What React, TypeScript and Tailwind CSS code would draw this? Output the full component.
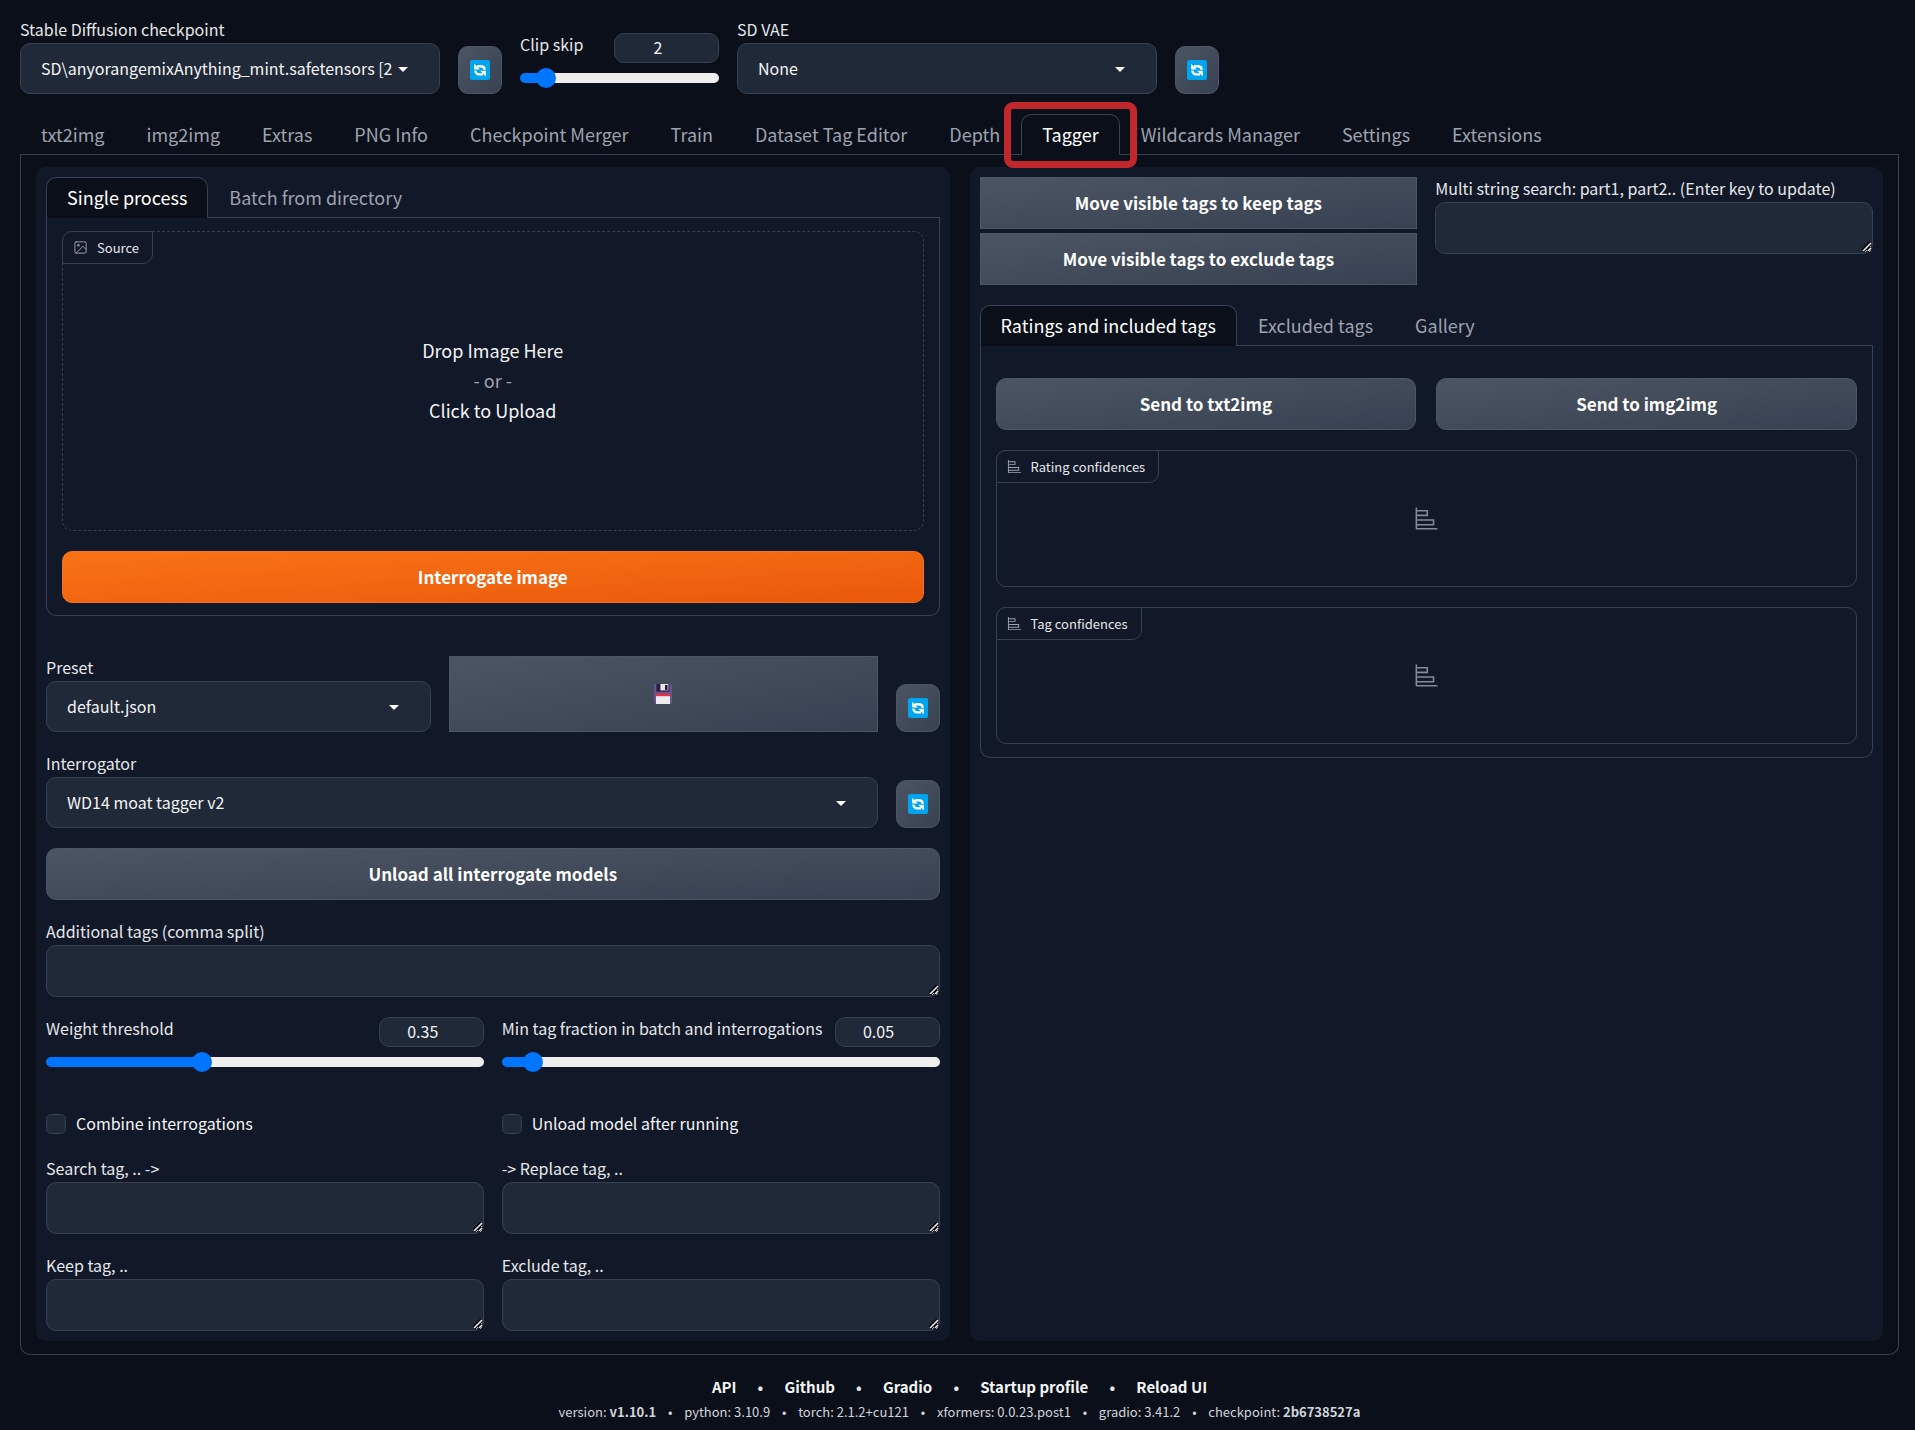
import { useId, useState } from 'react';
import type { CSSProperties, ReactNode } from 'react';
import { clsx } from 'clsx';

const FIELD = 'border border-[#374151] bg-[#1f2937] text-[#f3f4f6]';
const SECONDARY = 'border border-[#4b5563] bg-linear-to-br from-[#4b5563] to-[#374151]';

const mainTabs = [
  'txt2img',
  'img2img',
  'Extras',
  'PNG Info',
  'Checkpoint Merger',
  'Train',
  'Dataset Tag Editor',
  'Depth',
  'Tagger',
  'Wildcards Manager',
  'Settings',
  'Extensions',
];

const footerLinks = ['API', 'Github', 'Gradio', 'Startup profile', 'Reload UI'];

const versions = [
  { name: 'version', value: 'v1.10.1', strong: true },
  { name: 'python', value: '3.10.9' },
  { name: 'torch', value: '2.1.2+cu121' },
  { name: 'xformers', value: '0.0.23.post1' },
  { name: 'gradio', value: '3.41.2' },
  { name: 'checkpoint', value: '2b6738527a', strong: true },
];

function RefreshIcon() {
  return (
    <svg viewBox="0 0 20 20" className="size-5" aria-hidden="true">
      <rect width="20" height="20" rx="2" fill="#00a4ef" />
      <g fill="none" stroke="#fff" strokeWidth="2.4">
        <path d="M7 6.2h4.2a3.6 3.6 0 0 1 3.4 3.6" />
        <path d="M13 14.4H9a3.6 3.6 0 0 1-3.5-3.8" />
      </g>
      <path d="M4.2 3.8v5.8h5.6z" fill="#fff" />
      <path d="M15.8 16.4v-5.6h-5.6z" fill="#fff" />
    </svg>
  );
}

function FloppyIcon() {
  return (
    <svg viewBox="0 0 20 20" className="size-5" aria-hidden="true">
      <path d="M1 0h17l1 1v18.5H1z" fill="#64558f" />
      <path d="M3.4 0h13v7.6h-13z" fill="#2b1c3f" />
      <path d="M7.4 0h8v6.4h-8z" fill="#e8e6ea" />
      <path d="M12 1h2.6v5H12z" fill="#2b1c3f" />
      <path d="M3 9.6h14v2.6H3z" fill="#e8313e" />
      <path d="M3 12.2h14V20H3z" fill="#ececf0" />
    </svg>
  );
}

function ImageIcon() {
  return (
    <svg
      viewBox="0 0 24 24"
      className="size-[15px]"
      fill="none"
      stroke="currentColor"
      strokeWidth="1.5"
      strokeLinecap="round"
      strokeLinejoin="round"
      aria-hidden="true"
    >
      <rect x="3" y="3" width="18" height="18" rx="2" />
      <circle cx="8.5" cy="8.5" r="1.5" />
      <path d="m21 15-5-5L5 21" />
    </svg>
  );
}

function ChartIcon({ className }: { className: string }) {
  return (
    <svg viewBox="0 0 32 32" className={className} aria-hidden="true">
      <path
        fill="currentColor"
        d="M4 2H2v26a2 2 0 0 0 2 2h26v-2H4v-3h22v-8H4v-4h14V5H4Zm20 17v4H4v-4ZM16 7v4H4V7Z"
      />
    </svg>
  );
}

function Label({ htmlFor, children }: { htmlFor: string; children: ReactNode }) {
  return (
    <label htmlFor={htmlFor} className="block pb-0.5 text-base leading-[23px] whitespace-nowrap text-[#e5e7eb]">
      {children}
    </label>
  );
}

function Dropdown({ label, value, className }: { label: string; value: string; className: string }) {
  const id = useId();
  return (
    <div className={className}>
      <Label htmlFor={id}>{label}</Label>
      <div className="relative">
        <select
          id={id}
          className={clsx(FIELD, 'block h-[51px] w-full appearance-none rounded-[10px] pr-[46px] pb-0.5 pl-5 text-base')}
        >
          <option>{value}</option>
        </select>
        <svg viewBox="0 0 10 5" className="pointer-events-none absolute top-6 right-8 h-[5px] w-2.5" aria-hidden="true">
          <path d="M0 0h10L5 5z" fill="#fff" />
        </svg>
      </div>
    </div>
  );
}

function TextArea({ label, className }: { label: string; className?: string }) {
  const id = useId();
  return (
    <div className={className}>
      <Label htmlFor={id}>{label}</Label>
      <div className="relative">
        <textarea id={id} rows={1} className={clsx(FIELD, 'block h-[52px] w-full resize-y rounded-[10px] px-3 py-2')} />
        <svg viewBox="0 0 10 10" className="pointer-events-none absolute right-px bottom-[3px] size-2.5" aria-hidden="true">
          <path d="M0 9 8 1M5 9l3-3" stroke="#000" strokeWidth="1.5" />
          <path d="M1 10 9 2M6 10l3-3" stroke="#e5e7eb" strokeWidth="1.5" />
        </svg>
      </div>
    </div>
  );
}

type SliderProps = {
  label: string;
  min: number;
  max: number;
  step: number;
  initial: number;
  className?: string;
};

function Slider({ label, min, max, step, initial, className }: SliderProps) {
  const id = useId();
  const [value, setValue] = useState(initial);
  const ratio = (value - min) / (max - min);
  // the thumb is 20px wide, so the fill ends at its centre
  const fill = { '--fill': `calc(10px + (100% - 20px) * ${ratio})` } as CSSProperties;

  return (
    <div className={clsx('h-[61px]', className)}>
      <div className="flex items-start justify-between">
        <Label htmlFor={id}>{label}</Label>
        <input
          type="number"
          aria-label={`${label} value`}
          min={min}
          max={max}
          step={step}
          value={value}
          onChange={(e) => setValue(Number(e.target.value))}
          className={clsx(FIELD, 'h-[30px] w-[105px] rounded-[10px] pr-1.5 pb-0.5 pl-1 text-center text-base')}
        />
      </div>
      <input
        id={id}
        type="range"
        min={min}
        max={max}
        step={step}
        value={value}
        onChange={(e) => setValue(Number(e.target.value))}
        style={fill}
        className="mt-[5px] block h-5 w-full appearance-none bg-transparent [&::-webkit-slider-runnable-track]:h-2.5 [&::-webkit-slider-runnable-track]:rounded-full [&::-webkit-slider-runnable-track]:bg-[linear-gradient(to_right,#0075ff_var(--fill),#efefef_var(--fill))] [&::-webkit-slider-thumb]:-mt-[5px] [&::-webkit-slider-thumb]:size-5 [&::-webkit-slider-thumb]:appearance-none [&::-webkit-slider-thumb]:rounded-full [&::-webkit-slider-thumb]:bg-[#0075ff]"
      />
    </div>
  );
}

function Checkbox({ label }: { label: string }) {
  return (
    <label className="flex items-center gap-2.5 text-base leading-[18px] text-[#f3f4f6]">
      <input type="checkbox" className={clsx(FIELD, 'size-5 appearance-none rounded-[5px] checked:bg-[#ea580c]')} />
      <span className="pb-0.5">{label}</span>
    </label>
  );
}

function RefreshButton({ label }: { label: string }) {
  return (
    <button
      type="button"
      aria-label={label}
      className={clsx(SECONDARY, 'flex h-12 w-11 shrink-0 items-center justify-center rounded-[10px]')}
    >
      <RefreshIcon />
    </button>
  );
}

function Button({ children, className }: { children: ReactNode; className?: string }) {
  return (
    <button type="button" className={clsx('h-[52px] text-[17px] leading-6 font-bold text-white', className)}>
      {children}
    </button>
  );
}

function Tabs({ items, selected, marked }: { items: string[]; selected: string; marked?: boolean }) {
  return (
    <div role="tablist" className="flex h-[41px] border-b border-[#374151]">
      {items.map((item) => (
        <button
          key={item}
          type="button"
          role="tab"
          aria-selected={item === selected}
          className={clsx(
            'relative -mb-px h-[41px] rounded-t-[10px] border border-b-0 px-5 pb-0.5 text-lg leading-6 whitespace-nowrap',
            item === selected ? 'border-[#374151] bg-[#0b0f19] text-white' : 'border-transparent text-[#9ca3af]',
          )}
        >
          {item}
          {marked && item === selected && (
            <span className="pointer-events-none absolute -inset-x-[18px] -top-[13px] -bottom-[13px] z-10 rounded-[9px] border-7 border-[#c1272d]" />
          )}
        </button>
      ))}
    </div>
  );
}

function BlockLabel({ icon, children }: { icon: ReactNode; children: ReactNode }) {
  return (
    <div className="absolute -top-px -left-px flex h-[33px] items-center gap-[9px] rounded-tl-[10px] rounded-br-[10px] border border-[#374151] bg-[#111827] pr-[13px] pl-2.5 text-[13px] leading-5 text-[#e5e7eb]">
      <span className="text-[#9ca3af]">{icon}</span>
      {children}
    </div>
  );
}

function Confidences({ title }: { title: string }) {
  return (
    <section className="relative flex h-[137px] items-center justify-center rounded-[10px] border border-[#374151] text-[#848a96]">
      <BlockLabel icon={<ChartIcon className="size-[15px]" />}>{title}</BlockLabel>
      <ChartIcon className="size-[25px]" />
    </section>
  );
}

function QuickSettings() {
  return (
    <header className="flex items-end gap-[18px]">
      <Dropdown
        className="w-[420px]"
        label="Stable Diffusion checkpoint"
        value="SD\anyorangemixAnything_mint.safetensors [2b6738527a]"
      />
      <RefreshButton label="Refresh checkpoints" />
      <Slider className="w-[199px]" label="Clip skip" min={1} max={12} step={1} initial={2} />
      <Dropdown className="w-[420px]" label="SD VAE" value="None" />
      <RefreshButton label="Refresh VAE list" />
    </header>
  );
}

function InputPanel() {
  return (
    <section className="rounded-[10px] bg-[#111827] p-2.5">
      <Tabs items={['Single process', 'Batch from directory']} selected="Single process" />
      <div className="flex flex-col gap-5 rounded-b-[10px] border border-t-0 border-[#374151] px-[15px] pt-[13px] pb-3">
        <div className="relative h-[300px] rounded-[10px] border border-dashed border-[#374151]">
          <BlockLabel icon={<ImageIcon />}>Source</BlockLabel>
          <button
            type="button"
            className="flex size-full flex-col items-center justify-center pb-0.5 text-lg leading-[30px] text-[#f3f4f6]"
          >
            <span>Drop Image Here</span>
            <span className="text-[#9ca3af]">- or -</span>
            <span>Click to Upload</span>
          </button>
        </div>
        <Button className="rounded-[10px] border border-[#f97316] bg-linear-to-br from-[#f97316] to-[#ea580c]">
          Interrogate image
        </Button>
      </div>

      <div className="mt-10 flex flex-col gap-5">
        <div className="flex items-end gap-[18px]">
          <Dropdown className="flex-[19]" label="Preset" value="default.json" />
          <button
            type="button"
            aria-label="Save preset"
            className={clsx(SECONDARY, 'flex flex-[21] items-center justify-center self-stretch')}
          >
            <FloppyIcon />
          </button>
          <RefreshButton label="Refresh presets" />
        </div>
        <div className="flex items-end gap-[18px]">
          <Dropdown className="flex-1" label="Interrogator" value="WD14 moat tagger v2" />
          <RefreshButton label="Refresh interrogators" />
        </div>
        <Button className={clsx(SECONDARY, 'rounded-[10px]')}>Unload all interrogate models</Button>
        <TextArea label="Additional tags (comma split)" />
        <div className="grid grid-cols-2 gap-x-[18px]">
          <Slider label="Weight threshold" min={0} max={1} step={0.01} initial={0.35} />
          <Slider label="Min tag fraction in batch and interrogations" min={0} max={1} step={0.01} initial={0.05} />
        </div>
        <div className="grid grid-cols-2 gap-x-[18px] pt-4 pb-[3px]">
          <Checkbox label="Combine interrogations" />
          <Checkbox label="Unload model after running" />
        </div>
        <div className="grid grid-cols-2 gap-x-[18px] gap-y-5">
          <TextArea label="Search tag, .. ->" />
          <TextArea label="-> Replace tag, .." />
          <TextArea label="Keep tag, .." />
          <TextArea label="Exclude tag, .." />
        </div>
      </div>
    </section>
  );
}

function ResultPanel() {
  return (
    <section className="rounded-[10px] bg-[#111827] p-2.5">
      <div className="mb-5 grid grid-cols-2 gap-[18px]">
        <div className="flex flex-col gap-1">
          <Button className={SECONDARY}>Move visible tags to keep tags</Button>
          <Button className={SECONDARY}>Move visible tags to exclude tags</Button>
        </div>
        <TextArea label="Multi string search: part1, part2.. (Enter key to update)" />
      </div>
      <Tabs items={['Ratings and included tags', 'Excluded tags', 'Gallery']} selected="Ratings and included tags" />
      <div className="flex flex-col gap-5 rounded-b-[10px] border border-t-0 border-[#374151] px-[15px] pt-8 pb-[13px]">
        <div className="grid grid-cols-2 gap-5">
          <Button className={clsx(SECONDARY, 'rounded-[10px]')}>Send to txt2img</Button>
          <Button className={clsx(SECONDARY, 'rounded-[10px]')}>Send to img2img</Button>
        </div>
        <Confidences title="Rating confidences" />
        <Confidences title="Tag confidences" />
      </div>
    </section>
  );
}

function Footer() {
  return (
    <footer className="mt-[19px] flex flex-col items-center text-[#e5e7eb]">
      <nav className="flex text-[15px] leading-[26px] font-bold">
        {footerLinks.map((link, i) => (
          <span key={link} className="flex">
            {i > 0 && <span className="w-12 text-center">•</span>}
            <a href="#" className="text-[#f3f4f6]">
              {link}
            </a>
          </span>
        ))}
      </nav>
      <div className="flex text-[13px] leading-6 text-[#d1d5db]">
        {versions.map((v, i) => (
          <span key={v.name} className="flex">
            {i > 0 && <span className="w-7 text-center">•</span>}
            <span>
              {v.name}: <span className={clsx(v.strong && 'font-bold')}>{v.value}</span>
            </span>
          </span>
        ))}
      </div>
    </footer>
  );
}

export default function App() {
  return (
    <div className="min-h-screen bg-[#0b0f19] pt-[18px] pr-4 pl-5 font-['Noto_Sans_CJK_JP','Noto_Sans_CJK_SC',sans-serif]">
      <QuickSettings />
      <main className="mt-5">
        <Tabs items={mainTabs} selected="Tagger" marked />
        <div className="grid grid-cols-2 gap-5 rounded-b-[10px] border border-t-0 border-[#374151] px-[15px] pt-3 pb-[13px]">
          <InputPanel />
          <ResultPanel />
        </div>
      </main>
      <Footer />
    </div>
  );
}
